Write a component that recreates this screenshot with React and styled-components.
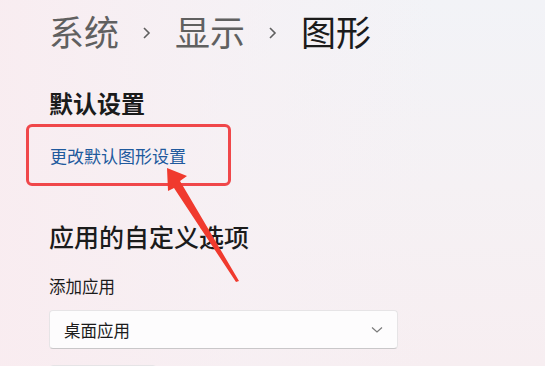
import styled, { createGlobalStyle } from "styled-components"

const GlobalStyle = createGlobalStyle`
  html, body {
    margin: 0;
    padding: 0;
  }
  body {
    font-family: "Noto Sans CJK SC", "Noto Sans", sans-serif;
  }
`;

function Breadcrumb({ items }) {
  return (
    <StCrumbs>
      {items.map((item, i) => (
        <StCrumbItem key={item} $current={i === items.length - 1}>
          {item}
          {i < items.length - 1 && (
            <StCrumbSep>
              <svg width="9" height="14" viewBox="0 0 9 14">
                <path d="M2 2 L7 7 L2 12" fill="none" stroke="#5f5f5f" strokeWidth="1.6" />
              </svg>
            </StCrumbSep>
          )}
        </StCrumbItem>
      ))}
    </StCrumbs>
  )
}

function Arrow() {
  return (
    <StArrow width="545" height="366" viewBox="0 0 545 366">
      <polygon
        points="167,168 187,176 180,181 239,281 236,282 174,188 168,191"
        fill="#f03a2e"
      />
    </StArrow>
  )
}

const App = () => {
  return (
    <>
      <GlobalStyle />
      <StPage>
        <Breadcrumb items={["系统", "显示", "图形"]} />

        <StSectionTitle>默认设置</StSectionTitle>
        <StMarkBox>
          <StLink>更改默认图形设置</StLink>
        </StMarkBox>

        <StSubTitle>应用的自定义选项</StSubTitle>
        <StLabel>添加应用</StLabel>
        <StSelect>
          <span>桌面应用</span>
          <svg width="12" height="8" viewBox="0 0 12 8">
            <path d="M1 1.5 L6 6 L11 1.5" fill="none" stroke="#7a7a7a" strokeWidth="1.2" />
          </svg>
        </StSelect>
        <StBrowseEdge />

        <Arrow />
      </StPage>
    </>
  )
}

const StPage = styled.div`
  position: relative;
  width: 545px;
  height: 366px;
  overflow: hidden;
  box-sizing: border-box;
  padding: 9px 0 0 49px;
  background:
    linear-gradient(90deg, rgba(249, 236, 240, 0.9) 0%, rgba(247, 240, 244, 0.6) 45%, rgba(242, 244, 249, 0) 80%),
    linear-gradient(180deg, #f2f3f7 0%, #f5f1f4 50%, #f7eef1 100%);
  color: #1b1b1b;
`;

const StCrumbs = styled.div`
  display: flex;
  align-items: center;
  height: 44px;
`;

const StCrumbItem = styled.div`
  display: flex;
  align-items: center;
  font-size: 35px;
  line-height: 44px;
  color: ${(p) => (p.$current ? "#1b1b1b" : "#606060")};
`;

const StCrumbSep = styled.span`
  display: flex;
  align-items: center;
  margin: 4px 24px 0 23px;
`;

const StSectionTitle = styled.div`
  margin-top: 35px;
  font-size: 24px;
  line-height: 30px;
  font-weight: 600;
  color: #1b1b1b;
`;

const StMarkBox = styled.div`
  box-sizing: border-box;
  width: 205px;
  height: 62px;
  margin: 6px 0 0 -23px;
  padding-left: 21px;
  display: flex;
  align-items: center;
  border: 3px solid #f0474a;
  border-radius: 6px;
`;

const StLink = styled.span`
  font-size: 17px;
  line-height: 22px;
  color: #20599d;
  margin-top: 2px;
`;

const StSubTitle = styled.div`
  margin-top: 34px;
  font-size: 25px;
  line-height: 32px;
  font-weight: 500;
  color: #1b1b1b;
`;

const StLabel = styled.div`
  margin-top: 23px;
  font-size: 16.5px;
  line-height: 22px;
  color: #1b1b1b;
`;

const StSelect = styled.div`
  box-sizing: border-box;
  width: 349px;
  height: 39px;
  margin-top: 13px;
  padding: 0 14px 0 14px;
  display: flex;
  align-items: center;
  justify-content: space-between;
  background: #fdfcfd;
  border: 1px solid #e6e4e6;
  border-bottom-color: #c9c7c9;
  border-radius: 4px;
  font-size: 16.5px;
  color: #1b1b1b;
`;

const StBrowseEdge = styled.div`
  width: 106px;
  height: 20px;
  margin-top: 16px;
  background: #fbf8f9;
  border: 1px solid #e6e4e6;
  border-radius: 4px;
`;

const StArrow = styled.svg`
  position: absolute;
  left: 0;
  top: 0;
  pointer-events: none;
`;

export default App
